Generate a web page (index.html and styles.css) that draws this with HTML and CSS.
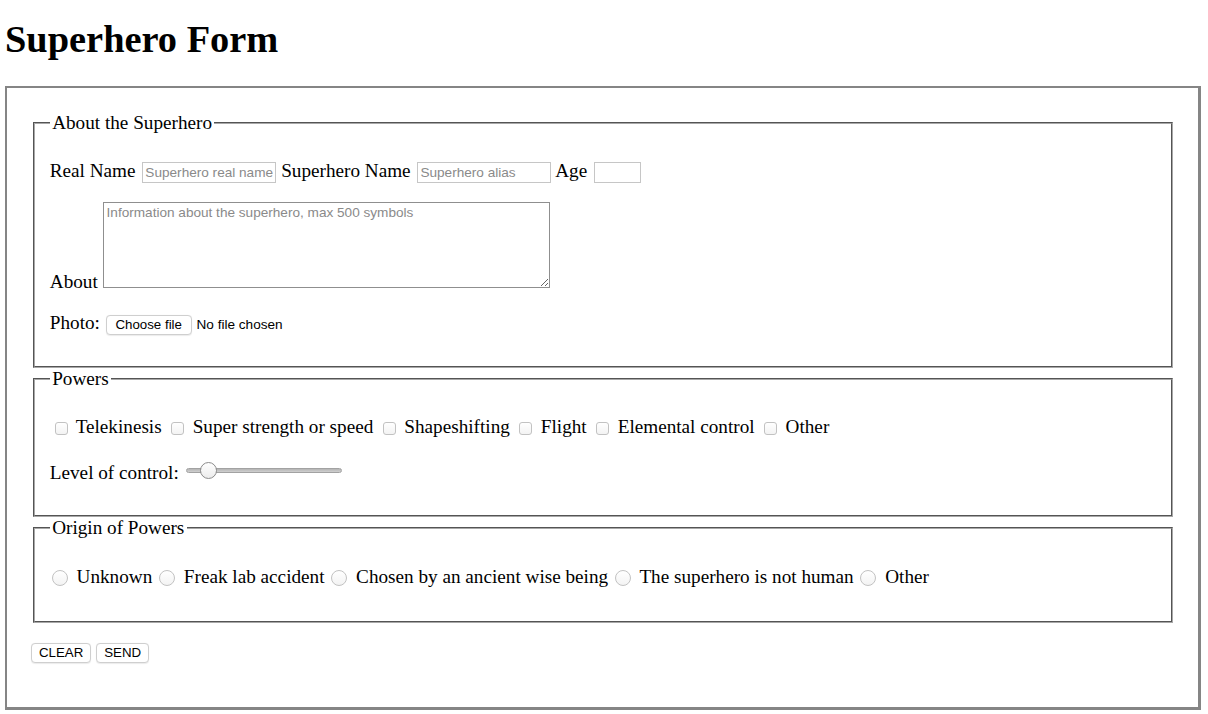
FILE: index.html
```html
<!DOCTYPE html>
<html lang="en">
<head>
<meta charset="utf-8">
<title>Superhero Form</title>
<link rel="stylesheet" href="styles.css">
</head>
<body>
<h1 class="title">Superhero Form</h1>
<form class="card">
  <fieldset class="group">
    <legend class="legend">About the Superhero</legend>
    <p class="row">
      <label for="real">Real Name</label>
      <input class="txt txt-name" id="real" type="text" placeholder="Superhero real name">
      <label for="alias">Superhero Name</label>
      <input class="txt txt-name" id="alias" type="text" placeholder="Superhero alias">
      <label for="age">Age</label>
      <input class="txt txt-age" id="age" type="text">
    </p>
    <p class="row">
      <label for="about">About</label>
      <textarea class="area" id="about" placeholder="Information about the superhero, max 500 symbols"></textarea>
    </p>
    <p class="row">
      <label>Photo:</label>
      <button type="button" class="btn btn-file">Choose file</button>
      <span class="file-note">No file chosen</span>
    </p>
  </fieldset>
  <fieldset class="group">
    <legend class="legend">Powers</legend>
    <p class="row">
      <input class="check" type="checkbox" id="p1"> <label for="p1">Telekinesis</label>
      <input class="check" type="checkbox" id="p2"> <label for="p2">Super strength or speed</label>
      <input class="check" type="checkbox" id="p3"> <label for="p3">Shapeshifting</label>
      <input class="check" type="checkbox" id="p4"> <label for="p4">Flight</label>
      <input class="check" type="checkbox" id="p5"> <label for="p5">Elemental control</label>
      <input class="check" type="checkbox" id="p6"> <label for="p6">Other</label>
    </p>
    <p class="row row-level">
      <label for="level">Level of control:</label>
      <input class="range" type="range" id="level" min="0" max="10" value="1">
    </p>
  </fieldset>
  <fieldset class="group">
    <legend class="legend">Origin of Powers</legend>
    <p class="row row-origin">
      <input class="radio" type="radio" name="origin" id="o1"> <label for="o1">Unknown</label>
      <input class="radio" type="radio" name="origin" id="o2"> <label for="o2">Freak lab accident</label>
      <input class="radio" type="radio" name="origin" id="o3"> <label for="o3">Chosen by an ancient wise being</label>
      <input class="radio" type="radio" name="origin" id="o4"> <label for="o4">The superhero is not human</label>
      <input class="radio" type="radio" name="origin" id="o5"> <label for="o5">Other</label>
    </p>
  </fieldset>
  <p class="actions">
    <button type="reset" class="btn">CLEAR</button>
    <button type="button" class="btn">SEND</button>
  </p>
</form>
</body>
</html>
```
FILE: styles.css
```css
html, body {
  background: #ffffff;
}
body {
  margin: 0;
  padding: 0 7px 0 5px;
  font-family: "Liberation Serif", "Times New Roman", serif;
  font-size: 19.2px;
  color: #000;
}
.title {
  font-size: 38.4px;
  font-weight: bold;
  margin: 19px 0 26px 0;
  line-height: 41px;
}
.card {
  border-style: solid;
  border-color: #858585;
  border-width: 2px 3px 3px 2px;
  padding: 24px 23px 24px 24px;
  margin: 0;
}
.group {
  margin: 0 2.4px;
  padding: 6.72px 14.4px 12px 14.4px;
  border: 2px groove #a8a8a8;
  min-width: 0;
}
.legend {
  padding: 0 2.4px;
}
.row {
  margin: 19.2px 0;
}
.row-level {
  padding-top: 4px;
}
.row-origin {
  padding: 1px 0 2px 0;
}
.txt {
  font-family: "Liberation Sans", Arial, sans-serif;
  font-size: 13.6px;
  height: 21px;
  box-sizing: border-box;
  border: 1px solid #c6c6c6;
  padding: 1px 2px;
  margin: 0 0 0 2px;
  color: #000;
  background: #fff;
  border-radius: 0;
  outline: none;
}
.txt::placeholder {
  color: #8a8a8a;
}
.txt-name {
  width: 134px;
}
.txt-age {
  width: 47px;
}
.area {
  font-family: "Liberation Sans", Arial, sans-serif;
  font-size: 13.6px;
  width: 447px;
  height: 86px;
  box-sizing: border-box;
  border: 1px solid #8f8f8f;
  padding: 2px 3px;
  margin: 0;
  vertical-align: baseline;
}
.area::placeholder {
  color: #8a8a8a;
}
.btn {
  font-family: "Liberation Sans", Arial, sans-serif;
  font-size: 13.3px;
  height: 20px;
  box-sizing: border-box;
  padding: 0 7px;
  border: 1px solid #cfcfcf;
  border-radius: 4px;
  background: #fff;
  color: #000;
  margin: 0;
  line-height: 18px;
  box-shadow: 0 0.5px 1px rgba(0,0,0,0.08);
}
.btn-file {
  width: 86px;
  margin-left: 1px;
}
.file-note {
  font-family: "Liberation Sans", Arial, sans-serif;
  font-size: 13.6px;
}
.check {
  appearance: none;
  -webkit-appearance: none;
  width: 13px;
  height: 13px;
  box-sizing: border-box;
  border: 1px solid #c2c2c2;
  border-radius: 3px;
  background: linear-gradient(#ffffff, #f3f3f3);
  margin: 0 3.6px 0 4.8px;
  vertical-align: -2px;
}
.radio {
  appearance: none;
  -webkit-appearance: none;
  width: 16px;
  height: 16px;
  box-sizing: border-box;
  border: 1px solid #c2c2c2;
  border-radius: 50%;
  background: linear-gradient(#ffffff, #f3f3f3);
  margin: 0 4px 0 2px;
  vertical-align: -3px;
}
.range {
  appearance: none;
  -webkit-appearance: none;
  width: 156px;
  height: 17px;
  margin: 0 2px;
  background: transparent;
  vertical-align: baseline;
}
.range::-webkit-slider-runnable-track {
  height: 5px;
  background: linear-gradient(#b4b4b4, #d0d0d0);
  border: 1px solid #a2a2a2;
  border-radius: 3px;
}
.range::-webkit-slider-thumb {
  -webkit-appearance: none;
  appearance: none;
  width: 17px;
  height: 17px;
  border-radius: 50%;
  background: linear-gradient(#ffffff, #ececec);
  border: 1px solid #8c8c8c;
  box-sizing: border-box;
  margin-top: -7px;
}
.actions {
  margin: 17.2px 0 20.2px 0;
}
```
